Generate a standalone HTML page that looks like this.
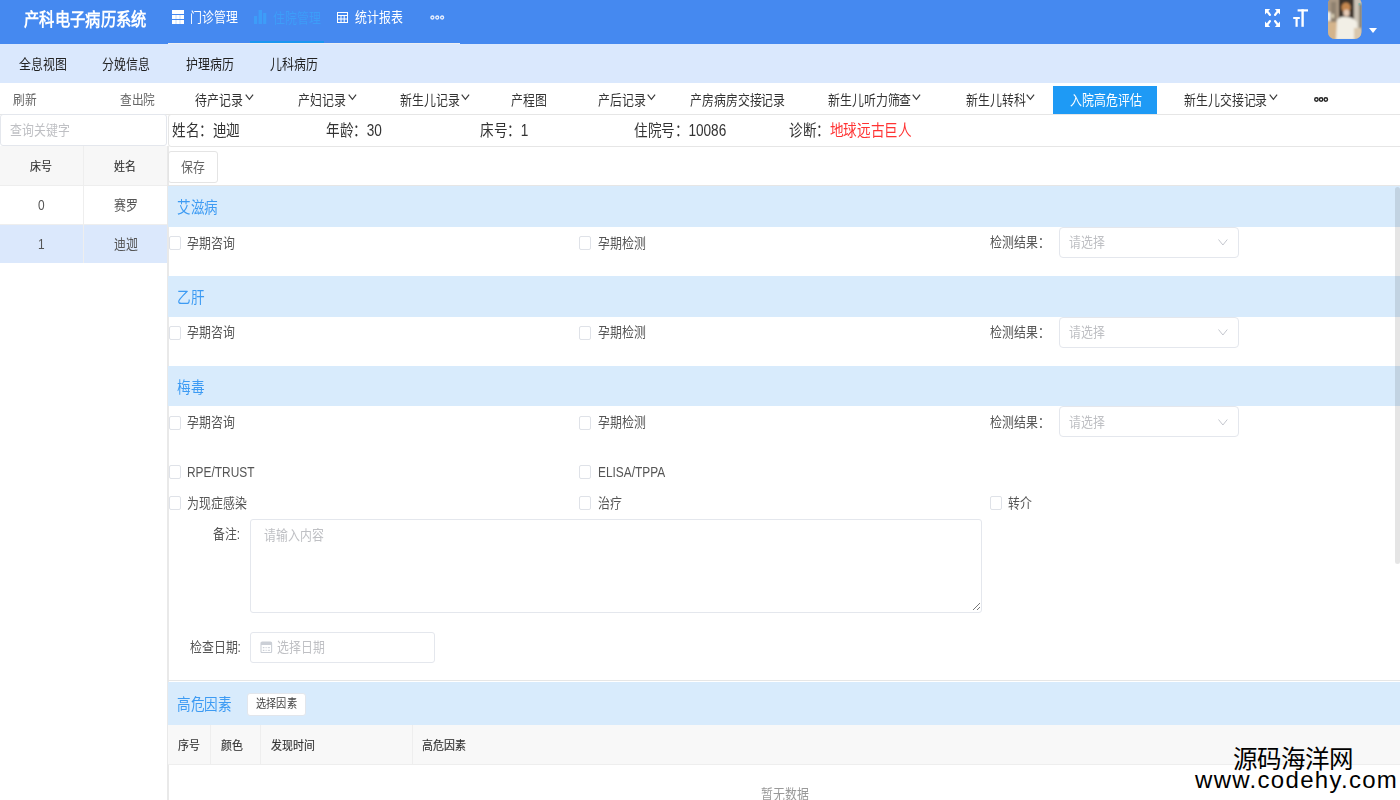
<!DOCTYPE html>
<html lang="zh-CN"><head><meta charset="utf-8">
<style>
*{box-sizing:border-box;margin:0;padding:0}
html,body{width:1400px;height:800px;overflow:hidden;background:#fff;font-family:"Liberation Sans",sans-serif;color:#333}
.b{position:absolute}
.t{position:absolute;white-space:nowrap;font-size:14px;line-height:14px;transform:scaleX(.85);transform-origin:0 0}
.f16{font-size:16px;line-height:16px}
.f13{font-size:13px;line-height:13px}
.f12{font-size:12px;line-height:12px}
.bold{font-weight:bold}
.med{-webkit-text-stroke:0.15px #333;color:#333;font-size:12px;line-height:12px;transform:scaleX(.91)}
.w{color:#fff}
.g6{color:#666}
.g5{color:#555}
.ph{color:#bfc0c4}
.blue{color:#3D9BF3}
.caret{position:absolute;width:5px;height:5px;border-right:1px solid #444;border-bottom:1px solid #444;transform:rotate(45deg)}
.sec{position:absolute;left:168px;width:1232px;background:#D8EBFC}
.cb{position:absolute;width:12px;height:14px;border:1px solid #DFE2E8;border-radius:2px;background:#fff}
.sel{position:absolute;left:1059px;width:180px;height:31px;border:1px solid #E4E7ED;border-radius:4px;background:#fff}
.chev{position:absolute;width:6px;height:6px;border-right:1px solid #c8c8c8;border-bottom:1px solid #c8c8c8;transform:rotate(45deg)}
.line{position:absolute;background:#e6e6e6}
</style></head><body>
<!-- header -->
<div class="b" style="left:0;top:0;width:1400px;height:44px;background:#4589F0"></div>
<div class="b" style="left:168px;top:43px;width:292px;height:1px;background:#ECEEF2"></div>
<div class="b" style="left:250px;top:41px;width:74px;height:2px;background:#1A96F0"></div>
<div class="t bold w" style="left:24px;top:11px;font-size:18px;line-height:18px">产科电子病历系统</div>
<svg class="b" style="left:172px;top:10px" width="12" height="14" viewBox="0 0 12 14"><g fill="#fff"><rect x="0" y="0" width="12" height="4"/><rect x="0" y="5" width="12" height="4"/><rect x="0" y="10" width="12" height="4"/></g><g fill="#4589F0" opacity=".35"><rect x="3.6" y="5" width="0.8" height="9"/><rect x="7.6" y="5" width="0.8" height="9"/></g></svg>
<div class="t w" style="left:190px;top:10px">门诊管理</div>
<svg class="b" style="left:254px;top:10px" width="13" height="14" viewBox="0 0 13 14"><g fill="#3D9DF8"><rect x="0" y="6" width="3.1" height="8"/><rect x="4.6" y="0" width="3.4" height="14"/><rect x="9.1" y="3" width="3.2" height="11"/></g></svg>
<div class="t" style="left:273px;top:10.5px;color:#3D9DF8">住院管理</div>
<svg class="b" style="left:337px;top:12px" width="11" height="11" viewBox="0 0 11 11"><g fill="none" stroke="#fff" stroke-width="1"><rect x="0.5" y="0.5" width="10" height="10"/><line x1="0.5" y1="3.5" x2="10.5" y2="3.5"/><line x1="0.5" y1="7" x2="10.5" y2="7"/><line x1="4" y1="3.5" x2="4" y2="10.5"/><line x1="7.2" y1="3.5" x2="7.2" y2="10.5"/></g></svg>
<div class="t w" style="left:354.5px;top:10px">统计报表</div>
<svg class="b" style="left:430px;top:15px" width="15" height="5" viewBox="0 0 15 5"><g fill="none" stroke="#e8effd" stroke-width="1.3"><circle cx="2.4" cy="2.5" r="1.5"/><circle cx="7.25" cy="2.5" r="1.5"/><circle cx="12.1" cy="2.5" r="1.5"/></g></svg>
<!-- header right icons -->
<svg class="b" style="left:1265px;top:9px" width="15" height="18" viewBox="0 0 15 18"><g fill="#fff"><path d="M0 0 H5.2 L0 5.6Z"/><path d="M15 0 H9.8 L15 5.6Z"/><path d="M0 18 H5.2 L0 12.4Z"/><path d="M15 18 H9.8 L15 12.4Z"/></g><g stroke="#fff" stroke-width="2.1" stroke-linecap="round"><path d="M2 2 L5 6"/><path d="M13 2 L10 6"/><path d="M2 16 L5 12"/><path d="M13 16 L10 12"/></g></svg>
<svg class="b" style="left:1293px;top:9px" width="16" height="18" viewBox="0 0 16 18"><g fill="#fff"><rect x="0.2" y="8" width="6.6" height="2"/><rect x="2.5" y="8" width="2.2" height="9.8"/><rect x="4.6" y="0.3" width="10.4" height="2.2"/><rect x="8.4" y="0.3" width="2.4" height="17.5"/></g></svg>
<svg class="b" style="left:1328px;top:0" width="34" height="39" viewBox="0 0 34 39">
<defs><clipPath id="av"><rect x="0" y="-3" width="33.5" height="42" rx="7" ry="7"/></clipPath>
<filter id="bl" x="-20%" y="-20%" width="140%" height="140%"><feGaussianBlur stdDeviation="1.1"/></filter></defs>
<g clip-path="url(#av)">
<rect x="0" y="0" width="34" height="39" fill="#b6a58e"/>
<g filter="url(#bl)">
<rect x="-2" y="-2" width="12" height="26" fill="#a89782"/>
<rect x="3" y="2" width="5" height="22" fill="#8f8170"/>
<rect x="-2" y="22" width="14" height="20" fill="#d4b48c"/>
<rect x="-1" y="12" width="3.5" height="9" fill="#f6f4ee"/>
<rect x="3.5" y="14" width="2.5" height="4" fill="#ddd3b8"/>
<rect x="11" y="-2" width="16" height="21" fill="#3a3129"/>
<rect x="26" y="-2" width="10" height="30" fill="#cbc3b5"/>
<rect x="31" y="4" width="4" height="26" fill="#8c8476"/>
<ellipse cx="18" cy="7.5" rx="4.5" ry="5" fill="#c4874f"/>
<ellipse cx="18.5" cy="13" rx="3.2" ry="3.5" fill="#e6cbb6"/>
<path d="M8 40 L9 20 Q12 16 18 17 Q25 17 29 22 L30 40Z" fill="#f2efe6"/>
<rect x="26" y="28" width="8" height="12" fill="#d9c7ad"/>
</g>
<rect x="30.5" y="3" width="2" height="2.5" fill="#3fb8b0" opacity=".45"/>
</g></svg>
<svg class="b" style="left:1369px;top:28px" width="8" height="5" viewBox="0 0 8 5"><path d="M0 0 H8 L4 5Z" fill="#fff"/></svg>

<!-- nav -->
<div class="b" style="left:0;top:44px;width:1400px;height:39px;background:#DAE8FD"></div>
<div class="b" style="left:168px;top:43px;width:292px;height:1px;background:#ECEEF2"></div>
<div class="t" style="left:18.5px;top:56.5px;color:#222">全息视图</div>
<div class="t" style="left:102px;top:56.5px;color:#222">分娩信息</div>
<div class="t" style="left:186px;top:56.5px;color:#222">护理病历</div>
<div class="t" style="left:270px;top:56.5px;color:#222">儿科病历</div>

<!-- toolbar -->
<div class="line" style="left:0;top:114px;width:1400px;height:1px"></div>
<div class="b" style="left:1053px;top:86px;width:104px;height:28px;background:#1E9AF5"></div>
<div class="t g6" style="left:12.5px;top:93px;font-size:13px;line-height:13px;transform:scaleX(.9)">刷新</div>
<div class="t g6" style="left:120px;top:93px;font-size:13px;line-height:13px;transform:scaleX(.9)">查出院</div>
<div class="t" style="left:195px;top:93px">待产记录</div><svg class="b" style="left:244.5px;top:94px" width="9" height="7" viewBox="0 0 9 7"><path d="M0.7 0.7 L4.4 5.3 L8.1 0.7" fill="none" stroke="#3a3a3a" stroke-width="1.2"/></svg>
<div class="t" style="left:297.5px;top:93px">产妇记录</div><svg class="b" style="left:347.5px;top:94px" width="9" height="7" viewBox="0 0 9 7"><path d="M0.7 0.7 L4.4 5.3 L8.1 0.7" fill="none" stroke="#3a3a3a" stroke-width="1.2"/></svg>
<div class="t" style="left:399.5px;top:93px">新生儿记录</div><svg class="b" style="left:460.5px;top:94px" width="9" height="7" viewBox="0 0 9 7"><path d="M0.7 0.7 L4.4 5.3 L8.1 0.7" fill="none" stroke="#3a3a3a" stroke-width="1.2"/></svg>
<div class="t" style="left:511px;top:93px">产程图</div>
<div class="t" style="left:597.5px;top:93px">产后记录</div><svg class="b" style="left:646.5px;top:94px" width="9" height="7" viewBox="0 0 9 7"><path d="M0.7 0.7 L4.4 5.3 L8.1 0.7" fill="none" stroke="#3a3a3a" stroke-width="1.2"/></svg>
<div class="t" style="left:690px;top:93px">产房病房交接记录</div>
<div class="t" style="left:828px;top:93px">新生儿听力筛查</div><svg class="b" style="left:911.5px;top:94px" width="9" height="7" viewBox="0 0 9 7"><path d="M0.7 0.7 L4.4 5.3 L8.1 0.7" fill="none" stroke="#3a3a3a" stroke-width="1.2"/></svg>
<div class="t" style="left:965.5px;top:93px">新生儿转科</div><svg class="b" style="left:1025.5px;top:94px" width="9" height="7" viewBox="0 0 9 7"><path d="M0.7 0.7 L4.4 5.3 L8.1 0.7" fill="none" stroke="#3a3a3a" stroke-width="1.2"/></svg>
<div class="t w" style="left:1069.5px;top:93px">入院高危评估</div>
<div class="t" style="left:1184px;top:93px">新生儿交接记录</div><svg class="b" style="left:1268.5px;top:94px" width="9" height="7" viewBox="0 0 9 7"><path d="M0.7 0.7 L4.4 5.3 L8.1 0.7" fill="none" stroke="#3a3a3a" stroke-width="1.2"/></svg>
<svg class="b" style="left:1313px;top:96px" width="16" height="7" viewBox="0 0 16 7"><g fill="none" stroke="#222" stroke-width="1.4"><circle cx="3.4" cy="3.5" r="1.7"/><circle cx="8.1" cy="3.5" r="1.7"/><circle cx="12.8" cy="3.5" r="1.7"/></g></svg>

<!-- left panel -->
<div class="line" style="left:166.5px;top:146px;width:2px;height:654px;background:#e9e9e9"></div>
<div class="b" style="left:0px;top:114px;width:167px;height:32px;border:1px solid #E4E7ED;border-radius:3px;background:#fff"></div>
<div class="t ph" style="left:10px;top:122.5px">查询关键字</div>
<div class="b" style="left:0;top:146px;width:167px;height:39px;background:#F7F7F7"></div>
<div class="b" style="left:0;top:224px;width:167px;height:39px;background:#DBE8FC"></div>
<div class="line" style="left:83px;top:146px;width:1px;height:117px;background:#eeeeee"></div>
<div class="line" style="left:0;top:185px;width:167px;height:1px;background:#eeeeee"></div>
<div class="line" style="left:0;top:224px;width:167px;height:1px;background:#eeeeee"></div>
<div class="t f13 med" style="left:30px;top:161px">床号</div>
<div class="t f13 med" style="left:114px;top:161px">姓名</div>
<div class="t g5" style="left:37.5px;top:198px">0</div>
<div class="t g5" style="left:113.5px;top:198px">赛罗</div>
<div class="t g5" style="left:37.5px;top:237px">1</div>
<div class="t g5" style="left:113.5px;top:237px">迪迦</div>

<!-- info row -->
<div class="b" style="left:167.5px;top:114px;width:1240px;height:33px;border:1px solid #e6e6e6;border-radius:3px"></div>
<div class="t f16" style="left:171.5px;top:123px">姓名：迪迦</div>
<div class="t f16" style="left:326px;top:123px">年龄：30</div>
<div class="t f16" style="left:480px;top:123px">床号：1</div>
<div class="t f16" style="left:633.5px;top:123px">住院号：10086</div>
<div class="t f16" style="left:788.5px;top:123px">诊断：<span style="color:#F33">地球远古巨人</span></div>
<div class="b" style="left:168px;top:151px;width:50px;height:32px;border:1px solid #e4e4e4;border-radius:3px;background:#fff"></div>
<div class="t" style="left:180.5px;top:159.5px;color:#666">保存</div>

<!-- sections -->
<div class="line" style="left:168px;top:185px;width:1232px;height:1px"></div><div class="sec" style="top:186px;height:40.5px"></div>
<div class="t f16 blue" style="left:177px;top:200px">艾滋病</div>
<div class="cb" style="left:169px;top:236px"></div><div class="t g5" style="left:186.5px;top:235.5px">孕期咨询</div>
<div class="cb" style="left:579px;top:236px"></div><div class="t g5" style="left:597.5px;top:235.5px">孕期检测</div>
<div class="t g5" style="left:989.5px;top:235px">检测结果：</div>
<div class="sel" style="top:227px"></div><div class="t ph" style="left:1068.5px;top:235px">请选择</div><svg class="b" style="left:1218px;top:239px" width="10" height="7" viewBox="0 0 10 7"><path d="M0.5 0.5 L4.9 6 L9.3 0.5" fill="none" stroke="#C4C7CE" stroke-width="1"/></svg>

<div class="sec" style="top:276px;height:40.5px"></div>
<div class="t f16 blue" style="left:177px;top:289.5px">乙肝</div>
<div class="cb" style="left:169px;top:325.5px"></div><div class="t g5" style="left:186.5px;top:325px">孕期咨询</div>
<div class="cb" style="left:579px;top:325.5px"></div><div class="t g5" style="left:597.5px;top:325px">孕期检测</div>
<div class="t g5" style="left:989.5px;top:325px">检测结果：</div>
<div class="sel" style="top:317px"></div><div class="t ph" style="left:1068.5px;top:325px">请选择</div><svg class="b" style="left:1218px;top:329px" width="10" height="7" viewBox="0 0 10 7"><path d="M0.5 0.5 L4.9 6 L9.3 0.5" fill="none" stroke="#C4C7CE" stroke-width="1"/></svg>

<div class="sec" style="top:365.5px;height:40.5px"></div>
<div class="t f16 blue" style="left:177px;top:380px">梅毒</div>
<div class="cb" style="left:169px;top:415.5px"></div><div class="t g5" style="left:186.5px;top:415px">孕期咨询</div>
<div class="cb" style="left:579px;top:415.5px"></div><div class="t g5" style="left:597.5px;top:415px">孕期检测</div>
<div class="t g5" style="left:989.5px;top:415px">检测结果：</div>
<div class="sel" style="top:406px"></div><div class="t ph" style="left:1068.5px;top:414.5px">请选择</div><svg class="b" style="left:1218px;top:418.5px" width="10" height="7" viewBox="0 0 10 7"><path d="M0.5 0.5 L4.9 6 L9.3 0.5" fill="none" stroke="#C4C7CE" stroke-width="1"/></svg>

<div class="cb" style="left:169px;top:464.5px"></div><div class="t g5" style="left:187px;top:464.5px">RPE/TRUST</div>
<div class="cb" style="left:579px;top:464.5px"></div><div class="t g5" style="left:597.5px;top:464.5px">ELISA/TPPA</div>
<div class="cb" style="left:169px;top:496px"></div><div class="t g5" style="left:187px;top:496px">为现症感染</div>
<div class="cb" style="left:579px;top:496px"></div><div class="t g5" style="left:597.5px;top:496px">治疗</div>
<div class="cb" style="left:990px;top:496px"></div><div class="t g5" style="left:1008px;top:496px">转介</div>

<div class="t g5" style="left:213px;top:527px">备注:</div>
<div class="b" style="left:250px;top:518.5px;width:732px;height:94px;border:1px solid #E4E7ED;border-radius:3px;background:#fff"></div>
<svg class="b" style="left:972px;top:602px" width="8" height="8" viewBox="0 0 8 8"><g stroke="#777" stroke-width="1"><line x1="1" y1="8" x2="8" y2="1"/><line x1="5" y1="8" x2="8" y2="5"/></g></svg>
<div class="t ph" style="left:263.5px;top:528px">请输入内容</div>
<div class="t g5" style="left:190px;top:639.5px">检查日期:</div>
<div class="b" style="left:250px;top:631.5px;width:185px;height:31px;border:1px solid #E4E7ED;border-radius:3px;background:#fff"></div>
<svg class="b" style="left:260px;top:640.5px" width="12.5" height="12.5" viewBox="0 0 12.5 12.5"><rect x="1" y="1" width="10.6" height="10.6" rx="1.2" fill="none" stroke="#CBCFD6" stroke-width="1.1"/><rect x="1" y="1" width="10.6" height="3" fill="#CBCFD6"/><g fill="#CBCFD6"><rect x="2.8" y="6" width="1.6" height="1.2"/><rect x="5.3" y="6" width="2" height="1.2" opacity=".6"/><rect x="8.2" y="6" width="1.6" height="1.2"/><rect x="2.8" y="8.8" width="1.6" height="1.2"/><rect x="5.3" y="8.8" width="2" height="1.2" opacity=".6"/><rect x="8.2" y="8.8" width="1.6" height="1.2"/></g></svg>
<div class="t ph" style="left:276.5px;top:640px">选择日期</div>

<div class="line" style="left:168px;top:680px;width:1232px;height:1px"></div>
<div class="sec" style="top:682px;height:43px"></div>
<div class="t f16 blue" style="left:176.5px;top:697px">高危因素</div>
<div class="b" style="left:246.5px;top:692.5px;width:59.5px;height:23px;border-radius:3px;background:#fff;border:1px solid #E2E6EC"></div>
<div class="t f12" style="left:256px;top:697.8px;color:#444">选择因素</div>
<div class="b" style="left:168px;top:725px;width:1232px;height:39px;background:#F8F8F8"></div>
<div class="line" style="left:168px;top:764px;width:1232px;height:1px;background:#eeeeee"></div>
<div class="line" style="left:210px;top:725px;width:1px;height:39px;background:#eeeeee"></div>
<div class="line" style="left:260px;top:725px;width:1px;height:39px;background:#eeeeee"></div>
<div class="line" style="left:412px;top:725px;width:1px;height:39px;background:#eeeeee"></div>
<div class="t f13 med" style="left:178px;top:740px">序号</div>
<div class="t f13 med" style="left:221px;top:740px">颜色</div>
<div class="t f13 med" style="left:271px;top:740px">发现时间</div>
<div class="t f13 med" style="left:422px;top:740px">高危因素</div>
<div class="t" style="left:761px;top:787px;color:#999">暂无数据</div>

<!-- scrollbar -->
<div class="b" style="left:1395px;top:187px;width:5px;height:377px;border-radius:3px;background:rgba(0,0,0,.1)"></div>

<!-- watermark -->
<div class="b" style="left:1233px;top:748px;font-size:24.5px;line-height:24px;color:#000;white-space:nowrap">源码海洋网</div>
<div class="b" style="left:1195px;top:768px;font-size:24px;line-height:24px;color:#000;letter-spacing:1.3px;white-space:nowrap">www.codehy.com</div>
</body></html>
